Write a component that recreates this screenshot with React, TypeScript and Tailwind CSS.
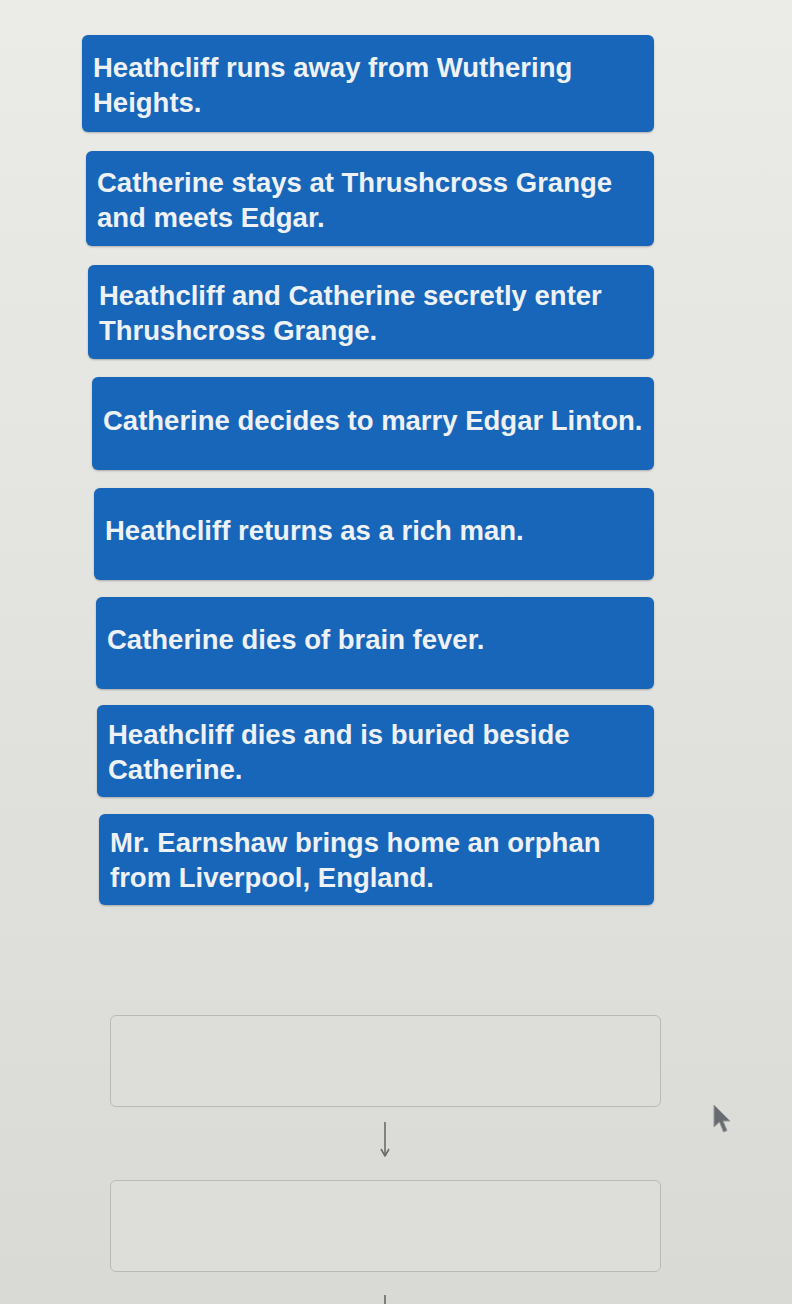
type Event = {
  id: number;
  text: string;
  box: string;
};

const events: Event[] = [
  { id: 1, text: "Heathcliff runs away from Wuthering Heights.", box: "mt-[35px] ml-[82px] h-[97px] pt-[15px]" },
  { id: 2, text: "Catherine stays at Thrushcross Grange and meets Edgar.", box: "mt-[19px] ml-[86px] h-[95px] pt-[14px]" },
  { id: 3, text: "Heathcliff and Catherine secretly enter Thrushcross Grange.", box: "mt-[19px] ml-[88px] h-[94px] pt-[13px]" },
  { id: 4, text: "Catherine decides to marry Edgar Linton.", box: "mt-[18px] ml-[92px] h-[93px] pt-[26px]" },
  { id: 5, text: "Heathcliff returns as a rich man.", box: "mt-[18px] ml-[94px] h-[92px] pt-[25px]" },
  { id: 6, text: "Catherine dies of brain fever.", box: "mt-[17px] ml-[96px] h-[92px] pt-[25px]" },
  { id: 7, text: "Heathcliff dies and is buried beside Catherine.", box: "mt-[16px] ml-[97px] h-[92px] pt-[12px]" },
  { id: 8, text: "Mr. Earnshaw brings home an orphan from Liverpool, England.", box: "mt-[17px] ml-[99px] h-[91px] pt-[11px]" },
];

function EventCard({ event }: { event: Event }) {
  return (
    <div
      className={`${event.box} mr-[138px] rounded-[6px] bg-[#1866b9] pl-[11px] pr-2 shadow-[0_1px_2px_rgba(0,0,0,0.25)]`}
    >
      <p className="text-[27.5px] font-bold leading-[35px] text-[#eef2f7]">
        {event.text}
      </p>
    </div>
  );
}

function DropSlot() {
  return (
    <div className="ml-[110px] mr-[131px] h-[92px] rounded-[6px] border border-[#b9bab4] bg-[#dddeda]" />
  );
}

function DownArrow() {
  return (
    <svg width="14" height="37" viewBox="0 0 14 37" fill="none">
      <path d="M7 1v33" stroke="#6b6c68" strokeWidth="1.6" />
      <path d="M3 28l4 7 4-7" stroke="#6b6c68" strokeWidth="1.6" strokeLinejoin="round" />
    </svg>
  );
}

export default function App() {
  return (
    <div
      className="relative min-h-[1304px] w-[792px] overflow-hidden bg-gradient-to-b from-[#ebebe8] via-[#e2e3de] to-[#d9dad5]"
      style={{ fontFamily: '"Liberation Sans", Arial, sans-serif' }}
    >
      <div className="flex flex-col">
        {events.map((event) => (
          <EventCard key={event.id} event={event} />
        ))}
      </div>

      <div className="mt-[110px] flex flex-col">
        <DropSlot />
        <div className="flex h-[73px] items-start justify-center pr-[22px] pt-[14px]">
          <DownArrow />
        </div>
        <DropSlot />
        <div className="ml-[384px] mt-[23px] h-[12px] w-[1.5px] bg-[#7d7e7a]" />
      </div>

      {/* mouse cursor resting beside the slots */}
      <svg
        className="absolute left-[712px] top-[1104px] opacity-85"
        width="24"
        height="32"
        viewBox="0 0 22 32"
      >
        <path
          d="M1 1v22l5.5-5 4 10 3.5-1.5-4-9.5H17z"
          fill="#55585d"
          stroke="#8a8c90"
          strokeWidth="1"
          strokeLinejoin="round"
        />
      </svg>
    </div>
  );
}
